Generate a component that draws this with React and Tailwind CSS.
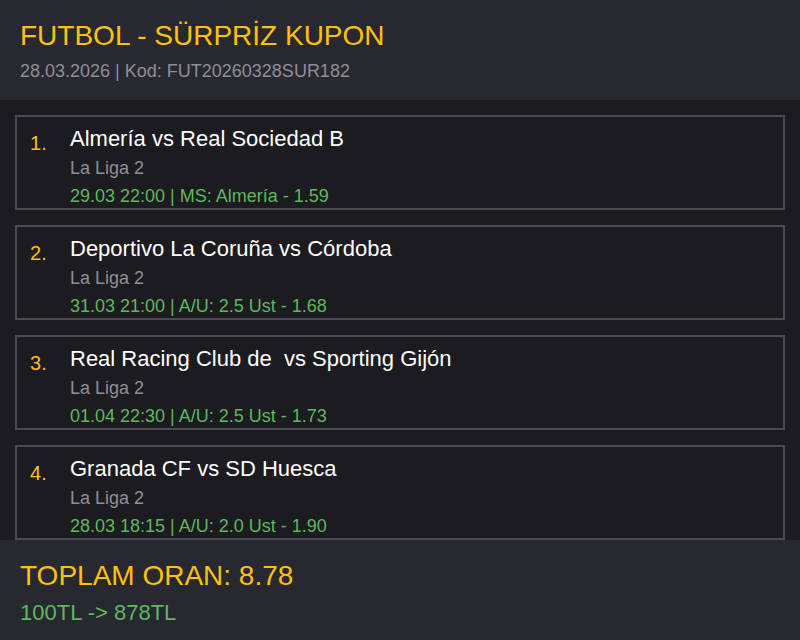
import React from 'react';

const matches = [
  {
    teams: 'Almería vs Real Sociedad B',
    league: 'La Liga 2',
    info: '29.03 22:00 | MS: Almería - 1.59',
  },
  {
    teams: 'Deportivo La Coruña vs Córdoba',
    league: 'La Liga 2',
    info: '31.03 21:00 | A/U: 2.5 Ust - 1.68',
  },
  {
    teams: 'Real Racing Club de \u00a0vs Sporting Gijón',
    league: 'La Liga 2',
    info: '01.04 22:30 | A/U: 2.5 Ust - 1.73',
  },
  {
    teams: 'Granada CF vs SD Huesca',
    league: 'La Liga 2',
    info: '28.03 18:15 | A/U: 2.0 Ust - 1.90',
  },
];

const MatchCard = ({ index, match }) => (
  <div className="flex h-[95px] shrink-0 border-2 border-[#4a4a52] bg-[#1c1b20] px-[13px] pt-[7px]">
    <div className="w-10 shrink-0 pt-1 text-[20px] leading-[30px] text-[#ffc107]">{index}.</div>
    <div className="flex flex-col">
      <div className="text-[22px] leading-[30px] text-white">{match.teams}</div>
      <div className="mt-[2px] text-[18px] leading-6 text-[#8f8f94]">{match.league}</div>
      <div className="mt-1 text-[18px] leading-6 text-[#5cb85c]">{match.info}</div>
    </div>
  </div>
);

const App = () => {
  return (
    <div className="flex h-[640px] w-[800px] flex-col overflow-hidden bg-[#1c1b20] font-['Liberation_Sans',Arial,sans-serif]">
      {/* Header */}
      <div className="h-[100px] shrink-0 bg-[#282831] px-5 pt-5">
        <div className="text-[28px] leading-8 text-[#ffc107]">FUTBOL - SÜRPRİZ KUPON</div>
        <div className="mt-[5px] text-[18px] leading-7 text-[#8f8f94]">28.03.2026 | Kod: FUT20260328SUR182</div>
      </div>

      {/* Matches */}
      <div className="flex flex-1 flex-col gap-[15px] overflow-hidden p-[15px]">
        {matches.map((m, i) => (
          <MatchCard key={i} index={i + 1} match={m} />
        ))}
      </div>

      {/* Footer */}
      <div className="h-[100px] shrink-0 bg-[#282831] px-5 pt-5">
        <div className="text-[28px] leading-8 text-[#ffc107]">TOPLAM ORAN: 8.78</div>
        <div className="mt-[6px] text-[22px] leading-[30px] text-[#5cb85c]">100TL -&gt; 878TL</div>
      </div>
    </div>
  );
};

export default App;
